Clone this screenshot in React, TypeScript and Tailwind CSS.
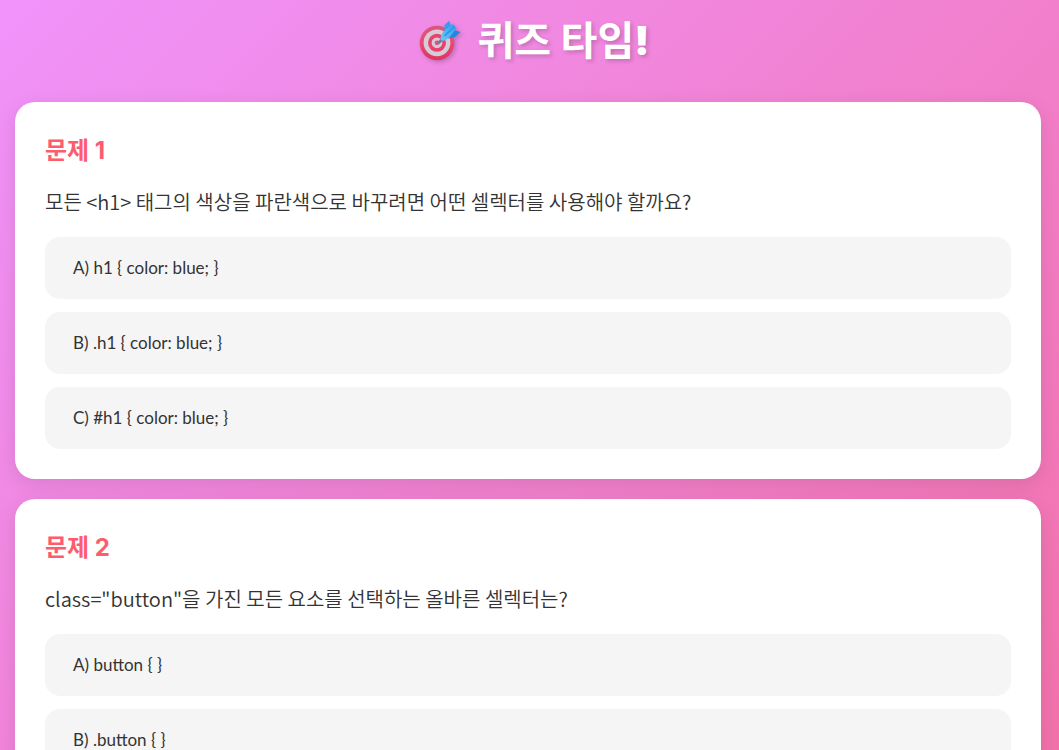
import { useState } from "react";

const questions = [
  {
    title: "문제 1",
    text: "모든 <h1> 태그의 색상을 파란색으로 바꾸려면 어떤 셀렉터를 사용해야 할까요?",
    options: ["A) h1 { color: blue; }", "B) .h1 { color: blue; }", "C) #h1 { color: blue; }"],
  },
  {
    title: "문제 2",
    text: 'class="button"을 가진 모든 요소를 선택하는 올바른 셀렉터는?',
    options: ["A) button { }", "B) .button { }", "C) #button { }"],
  },
];

function TargetIcon() {
  return (
    <svg
      viewBox="0 0 42 42"
      className="w-[42px] h-[42px] drop-shadow-[2px_2px_2px_rgba(0,0,0,0.2)]"
      aria-hidden="true"
    >
      <defs>
        <linearGradient id="rim" x1="0" y1="0" x2="0" y2="1">
          <stop offset="0" stopColor="#d9587c" />
          <stop offset="0.5" stopColor="#e84a72" />
          <stop offset="1" stopColor="#dc3560" />
        </linearGradient>
        <linearGradient id="fin" x1="0" y1="1" x2="1" y2="0">
          <stop offset="0" stopColor="#6cc8f5" />
          <stop offset="1" stopColor="#2f9cf0" />
        </linearGradient>
      </defs>
      <circle cx="18" cy="23" r="17.3" fill="url(#rim)" />
      <circle cx="18" cy="22.8" r="13.4" fill="#d8cbd8" />
      <circle cx="18" cy="22.8" r="9" fill="#e8416c" />
      <circle cx="18" cy="22.8" r="5.4" fill="#d8cbd8" />
      <circle cx="18" cy="22.8" r="2.4" fill="#d9587c" />
      {/* dart */}
      <path d="M20 22.5 24.5 18" stroke="#6f7f98" strokeWidth="3" strokeLinecap="round" />
      <path d="M25.5 11 25.5 5 30 .8 32.8 7.5 31 13Z" fill="#2fa0f2" />
      <path d="M29 18.5 36 17 41.6 12 34 9.8 28 12Z" fill="#2188e2" />
      <path d="M21.8 20C20.8 16.5 23.5 12 28 8.5L34 4 37.5 8.3 33 14C29.5 19 25.5 22 21.8 20Z" fill="url(#fin)" />
      <path d="M26 15.5 35 7" stroke="#2a93e8" strokeWidth="1.4" strokeLinecap="round" />
    </svg>
  );
}

export default function App() {
  const [answers, setAnswers] = useState<Record<number, number>>({});

  return (
    <main className="min-h-screen pt-[15px] pb-5 pl-[15px] pr-[18px] bg-[linear-gradient(135deg,#f093fb_0%,#f5576c_165%)] font-['Lato','Noto_Sans_CJK_KR',sans-serif] text-[#333333]">
      {/* Title */}
      <h1 className="flex items-center justify-center gap-[17px] pl-3 mb-[35px] text-[40px] leading-[52px] font-bold text-white font-['Inter','Noto_Sans_CJK_KR',sans-serif] [text-shadow:2px_2px_4px_rgba(0,0,0,0.2)]">
        <TargetIcon />
        <span>
          퀴즈 타임<span className="font-black">!</span>
        </span>
      </h1>

      {/* Questions */}
      <div className="flex flex-col gap-5">
        {questions.map((question, qIndex) => (
          <section
            key={question.title}
            className="p-[30px] rounded-[20px] bg-white shadow-[0_5px_20px_rgba(0,0,0,0.1)]"
          >
            <h2 className="mb-[18px] text-2xl leading-[37px] font-bold text-[#ff5b6e] font-['Inter','Noto_Sans_CJK_KR',sans-serif]">
              {question.title}
            </h2>
            <p className="mb-5 text-xl leading-[30px] font-[350] font-['Noto_Sans_CJK_KR',sans-serif]">
              {question.text}
            </p>
            <div className="flex flex-col gap-[13px]">
              {question.options.map((option, index) => (
                <button
                  key={option}
                  type="button"
                  aria-pressed={answers[qIndex] === index}
                  onClick={() => setAnswers({ ...answers, [qIndex]: index })}
                  className="px-7 py-[19px] rounded-[15px] bg-[#f5f5f5] text-left text-[17px] leading-6 cursor-pointer aria-pressed:bg-[#ffe3e7]"
                >
                  {option}
                </button>
              ))}
            </div>
          </section>
        ))}
      </div>
    </main>
  );
}
